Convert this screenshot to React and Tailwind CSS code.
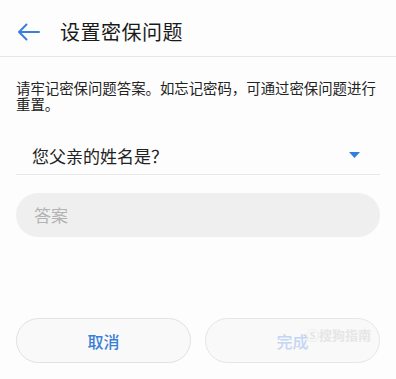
export default function App() {
  const font = { fontFamily: '"Noto Sans CJK SC", "Noto Sans", sans-serif' };
  return (
    <div className="w-[396px] h-[379px] bg-[#fdfdfd] flex flex-col overflow-hidden" style={font}>
      <div className="h-[57px] flex items-center border-b border-[#e6e6e6] pt-[8px]">
        <div className="w-[60px] flex items-center pl-[17px]">
          <svg width="24" height="18" viewBox="0 0 24 18" fill="none" stroke="#3c7fd9" strokeWidth="2" strokeLinecap="round" strokeLinejoin="round">
            <path d="M22 9H2M9.5 1.5L2 9l7.5 7.5" />
          </svg>
        </div>
        <div className="text-[20px] leading-none text-[#1a1a1a] tracking-[0.5px]">设置密保问题</div>
      </div>
      <div className="px-[16px] pt-[23px] text-[14.4px] leading-[16px] text-[#222] whitespace-nowrap">
        请牢记密保问题答案。如忘记密码，可通过密保问题进行
        <br />
        重置。
      </div>
      <div className="mx-[16px] mt-[24px] h-[39px] flex items-center justify-between border-b border-[#e8e8e8] pl-[16px] pr-[20px]">
        <span className="text-[17px] leading-none text-[#222]">您父亲的姓名是？</span>
        <svg width="11" height="6" viewBox="0 0 11 6">
          <path d="M0 0h11L5.5 6z" fill="#2f7fdc" />
        </svg>
      </div>
      <div className="mx-[16px] mt-[18px] h-[44px] rounded-full bg-[#efefef] flex items-center pl-[18px]">
        <span className="text-[17px] text-[#b3b3b3]">答案</span>
      </div>
      <div className="flex-1" />
      <div className="px-[16px] pb-[16px] flex gap-[14px]">
        <div className="flex-1 h-[45px] rounded-full border border-[#e2e2e2] bg-[#f9f9f9] flex items-center justify-center">
          <span className="text-[16px] font-medium text-[#3a7fd6]">取消</span>
        </div>
        <div className="relative flex-1 h-[45px] rounded-full border border-[#e6e6e6] bg-[#f9f9f9] flex items-center justify-center">
          <span className="text-[16px] font-medium text-[#c3d6f3]">完成</span>
          <span className="absolute right-[8px] top-[6px] text-[13px] text-[#e6e6e6] font-bold">Ⓢ搜狗指南</span>
        </div>
      </div>
    </div>
  );
}
